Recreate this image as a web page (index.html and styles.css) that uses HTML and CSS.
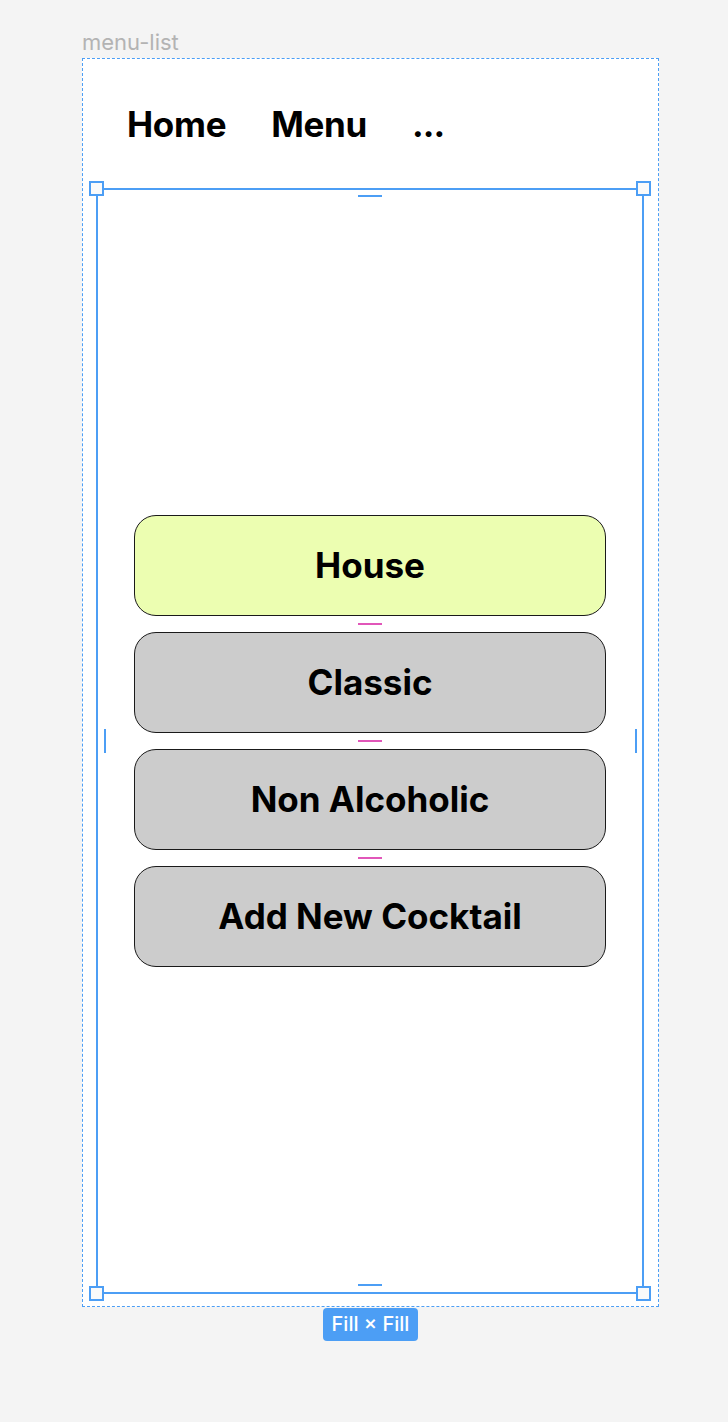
FILE: index.html
```html
<!DOCTYPE html>
<html>
<head>
  <meta charset="UTF-8">
  <title>menu-list</title>
  <link rel="stylesheet" href="styles.css">
</head>
<body>
  <div class="canvas">
    <div class="frame-label">menu-list</div>
    <div class="frame">
      <nav class="topnav">
        <span class="nav-item">Home</span>
        <span class="nav-item">Menu</span>
        <span class="nav-item more">...</span>
      </nav>

      <div class="selection">
        <!-- resize handles -->
        <span class="handle tl"></span>
        <span class="handle tr"></span>
        <span class="handle bl"></span>
        <span class="handle br"></span>

        <!-- padding markers -->
        <span class="pad pad-top"></span>
        <span class="pad pad-bottom"></span>
        <span class="pad pad-left"></span>
        <span class="pad pad-right"></span>

        <div class="menu-list">
          <button class="menu-btn active">House</button>
          <span class="gap-mark"></span>
          <button class="menu-btn">Classic</button>
          <span class="gap-mark"></span>
          <button class="menu-btn">Non Alcoholic</button>
          <span class="gap-mark"></span>
          <button class="menu-btn">Add New Cocktail</button>
        </div>
      </div>
    </div>
    <div class="badge-row">
      <span class="badge">Fill × Fill</span>
    </div>
  </div>
</body>
</html>
```

FILE: styles.css
```css
body {
  margin: 0;
  background-color: #f4f4f4;
  font-family: Inter, 'Liberation Sans', sans-serif;
  color: #000;
}
.canvas {
  width: 577px;
  padding: 30px 0 0 82px;
}
.frame-label {
  font-size: 22px;
  color: #b3b3b3;
  height: 28px;
  line-height: 25px;
}
.frame {
  height: 1249px;
  box-sizing: border-box;
  border: 1px dashed #4c9ef5;
  background-color: #fff;
  display: flex;
  flex-direction: column;
}
.topnav {
  height: 129px;
  flex-shrink: 0;
  display: flex;
  align-items: center;
  gap: 45px;
  padding: 0 0 0 44px;
  box-sizing: border-box;
}
.nav-item {
  font-size: 35px;
  font-weight: 700;
  letter-spacing: -0.3px;
  padding-top: 1px;
}
.nav-item.more {
  letter-spacing: -1px;
}
.selection {
  position: relative;
  flex: 1;
  margin: 0 14px 12px 13px;
  border: 2px solid #4c9ef5;
  display: flex;
  align-items: center;
  justify-content: center;
}
.handle {
  position: absolute;
  width: 11px;
  height: 11px;
  border: 2px solid #4c9ef5;
  background-color: #fafafa;
}
.tl { top: -9px; left: -9px; }
.tr { top: -9px; right: -9px; }
.bl { bottom: -9px; left: -9px; }
.br { bottom: -9px; right: -9px; }
.pad {
  position: absolute;
  background-color: #4c9ef5;
}
.pad-top, .pad-bottom {
  width: 24px;
  height: 2px;
  left: 50%;
  margin-left: -12px;
}
.pad-top { top: 5px; }
.pad-bottom { bottom: 6px; }
.pad-left, .pad-right {
  width: 2px;
  height: 24px;
  top: 50%;
  margin-top: -12px;
}
.pad-left { left: 6px; }
.pad-right { right: 5px; }
.menu-list {
  width: 472px;
  display: flex;
  flex-direction: column;
  align-items: center;
}
.menu-btn {
  width: 100%;
  height: 101px;
  box-sizing: border-box;
  border: 1px solid #1a1a1a;
  border-radius: 22px;
  background-color: #cccccc;
  font-family: Inter, 'Liberation Sans', sans-serif;
  font-size: 35px;
  font-weight: 700;
  color: #000;
  padding-bottom: 2px;
}
.menu-btn.active {
  background-color: #ecfeb1;
}
.gap-mark {
  display: block;
  width: 24px;
  height: 2px;
  margin: 7px 0;
  background-color: #e156b9;
}
.badge-row {
  display: flex;
  justify-content: center;
}
.badge {
  background-color: #4c9ef5;
  color: #fff;
  font-size: 20px;
  font-weight: 500;
  padding: 4px 9px 5px;
  border-radius: 4px;
  margin-top: 1px;
}
```
